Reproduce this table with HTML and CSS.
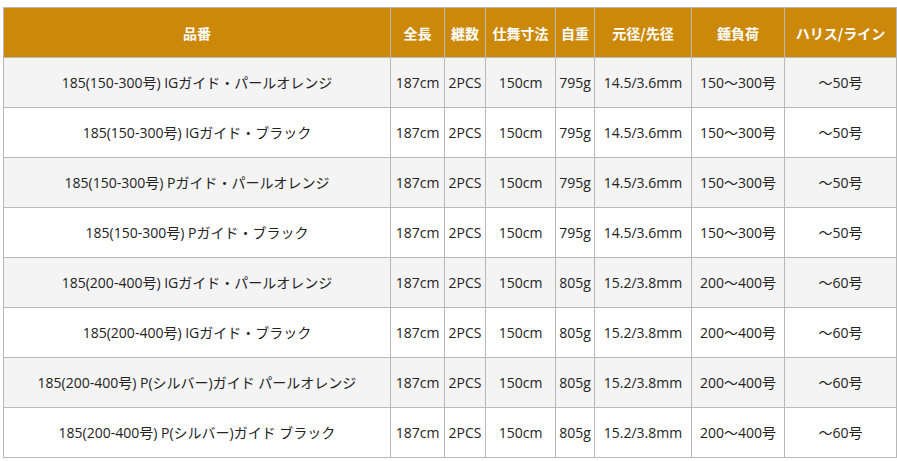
FILE: index.html
```html
<!DOCTYPE html>
<html lang="ja">
<head>
<meta charset="utf-8">
<link rel="stylesheet" href="styles.css">
</head>
<body>
<table class="spec">
  <colgroup>
    <col class="c1"><col class="c2"><col class="c3"><col class="c4"><col class="c5"><col class="c6"><col class="c7"><col class="c8">
  </colgroup>
  <thead>
    <tr>
      <th>品番</th><th>全長</th><th>継数</th><th>仕舞寸法</th><th>自重</th><th>元径/先径</th><th>錘負荷</th><th>ハリス/ライン</th>
    </tr>
  </thead>
  <tbody>
    <tr><td>185(150-300号) IGガイド・パールオレンジ</td><td>187cm</td><td>2PCS</td><td>150cm</td><td>795g</td><td>14.5/3.6mm</td><td>150～300号</td><td>～50号</td></tr>
    <tr><td>185(150-300号) IGガイド・ブラック</td><td>187cm</td><td>2PCS</td><td>150cm</td><td>795g</td><td>14.5/3.6mm</td><td>150～300号</td><td>～50号</td></tr>
    <tr><td>185(150-300号) Pガイド・パールオレンジ</td><td>187cm</td><td>2PCS</td><td>150cm</td><td>795g</td><td>14.5/3.6mm</td><td>150～300号</td><td>～50号</td></tr>
    <tr><td>185(150-300号) Pガイド・ブラック</td><td>187cm</td><td>2PCS</td><td>150cm</td><td>795g</td><td>14.5/3.6mm</td><td>150～300号</td><td>～50号</td></tr>
    <tr><td>185(200-400号) IGガイド・パールオレンジ</td><td>187cm</td><td>2PCS</td><td>150cm</td><td>805g</td><td>15.2/3.8mm</td><td>200～400号</td><td>～60号</td></tr>
    <tr><td>185(200-400号) IGガイド・ブラック</td><td>187cm</td><td>2PCS</td><td>150cm</td><td>805g</td><td>15.2/3.8mm</td><td>200～400号</td><td>～60号</td></tr>
    <tr><td>185(200-400号) P(シルバー)ガイド パールオレンジ</td><td>187cm</td><td>2PCS</td><td>150cm</td><td>805g</td><td>15.2/3.8mm</td><td>200～400号</td><td>～60号</td></tr>
    <tr><td>185(200-400号) P(シルバー)ガイド ブラック</td><td>187cm</td><td>2PCS</td><td>150cm</td><td>805g</td><td>15.2/3.8mm</td><td>200～400号</td><td>～60号</td></tr>
  </tbody>
</table>
</body>
</html>
```

FILE: styles.css
```css
html, body {
  margin: 0;
  padding: 0;
  background: #ffffff;
}
body {
  padding: 7px 0 0 3px;
  font-family: "Open Sans", "Noto Sans CJK JP", sans-serif;
  font-size: 14px;
  color: #222222;
}
.spec {
  border-collapse: collapse;
  table-layout: fixed;
  width: 893px;
}
.c1 { width: 387px; }
.c2 { width: 54px; }
.c3 { width: 41px; }
.c4 { width: 70px; }
.c5 { width: 39px; }
.c6 { width: 97px; }
.c7 { width: 93px; }
.c8 { width: 112px; }
.spec th,
.spec td {
  border: 1px solid #b8b8b8;
  text-align: center;
  vertical-align: middle;
  padding: 0;
  white-space: nowrap;
  overflow: hidden;
}
.spec th {
  height: 49px;
  background: #cc8808;
  color: #ffffff;
  font-weight: 700;
  font-family: "Noto Sans CJK JP", "Open Sans", sans-serif;
  font-size: 14px;
}
.spec td {
  height: 49px;
  line-height: 20px;
}
.spec tbody tr:nth-child(odd) td {
  background: #f4f4f4;
}
.spec tbody tr:nth-child(even) td {
  background: #ffffff;
}
```
